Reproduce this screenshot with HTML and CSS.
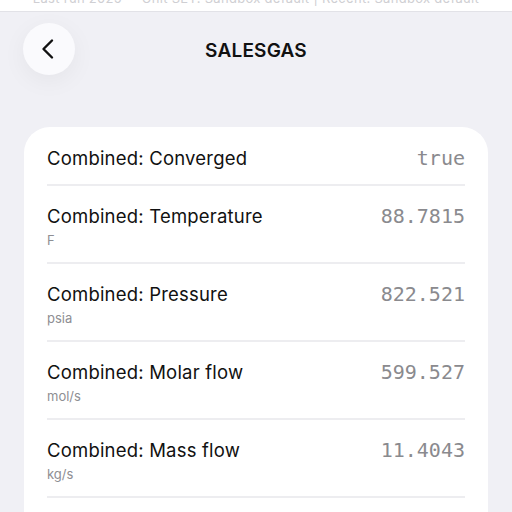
FILE: index.html
```html
<!DOCTYPE html>
<html>
<head>
<meta charset="utf-8">
<link rel="stylesheet" href="styles.css">
</head>
<body>
<div class="topbar"><span class="topbar-text">Last run 2025 &nbsp;&nbsp;&nbsp; Unit SET: Sandbox default | Recent: Sandbox default</span></div>
<header class="nav">
  <button class="back" aria-label="Back">
    <svg width="24" height="24" viewBox="0 0 24 24"><path d="M15 3.5 L6.5 12 L15 20.5" fill="none" stroke="#111" stroke-width="2.4" stroke-linecap="round" stroke-linejoin="round"/></svg>
  </button>
  <h1 class="title">SALESGAS</h1>
</header>
<main class="card">
  <div class="row first">
    <div class="labels"><div class="label">Combined: Converged</div></div>
    <div class="value">true</div>
  </div>
  <div class="row">
    <div class="labels"><div class="label">Combined: Temperature</div><div class="unit">F</div></div>
    <div class="value">88.7815</div>
  </div>
  <div class="row">
    <div class="labels"><div class="label">Combined: Pressure</div><div class="unit">psia</div></div>
    <div class="value">822.521</div>
  </div>
  <div class="row">
    <div class="labels"><div class="label">Combined: Molar flow</div><div class="unit">mol/s</div></div>
    <div class="value">599.527</div>
  </div>
  <div class="row">
    <div class="labels"><div class="label">Combined: Mass flow</div><div class="unit">kg/s</div></div>
    <div class="value">11.4043</div>
  </div>
</main>
</body>
</html>
```
FILE: styles.css
```css
html, body { margin: 0; padding: 0; }
body {
  background: #f0f0f5;
  font-family: Inter, "Liberation Sans", sans-serif;
  color: #111;
  width: 512px;
  height: 512px;
  overflow: hidden;
}
.topbar {
  height: 11px;
  background: #fff;
  border-bottom: 1px solid #e2e2e7;
  overflow: hidden;
  display: flex;
  justify-content: center;
}
.topbar-text {
  font-size: 13px;
  line-height: 13px;
  color: #cfcfd3;
  margin-top: -8px;
  white-space: nowrap;
  letter-spacing: 0.3px;
}
.nav {
  position: relative;
  height: 76px;
  display: flex;
  align-items: center;
  justify-content: center;
}
.back {
  position: absolute;
  left: 23px;
  top: 11px;
  width: 52px;
  height: 52px;
  border-radius: 50%;
  border: none;
  background: #fafafd;
  box-shadow: 0 6px 24px rgba(0,0,0,0.05);
  display: flex;
  align-items: center;
  justify-content: center;
  padding: 0;
}
.title {
  margin: 0;
  font-size: 19px;
  font-weight: 600;
  letter-spacing: 0.2px;
}
.card {
  margin: 39px 24px 0 24px;
  background: #fff;
  border-radius: 26px 26px 0 0;
  padding: 0 23px 40px;
}
.row {
  display: flex;
  justify-content: space-between;
  align-items: flex-start;
  padding: 19px 0 15px;
  border-bottom: 2px solid #ededf0;
  height: 42px;
}
.row.first {
  height: 22px;
  padding: 20px 0 15px;
}
.label {
  font-size: 18.5px;
  line-height: 22px;
  font-weight: 400;
  letter-spacing: 0.2px;
}
.unit {
  font-size: 13px;
  line-height: 16px;
  color: #8e8e93;
  margin-top: 5px;
}
.value {
  font-family: "DejaVu Sans Mono", "Liberation Mono", monospace;
  font-size: 20px;
  line-height: 22px;
  color: #8a8a8e;
  font-weight: 300;
}
```
